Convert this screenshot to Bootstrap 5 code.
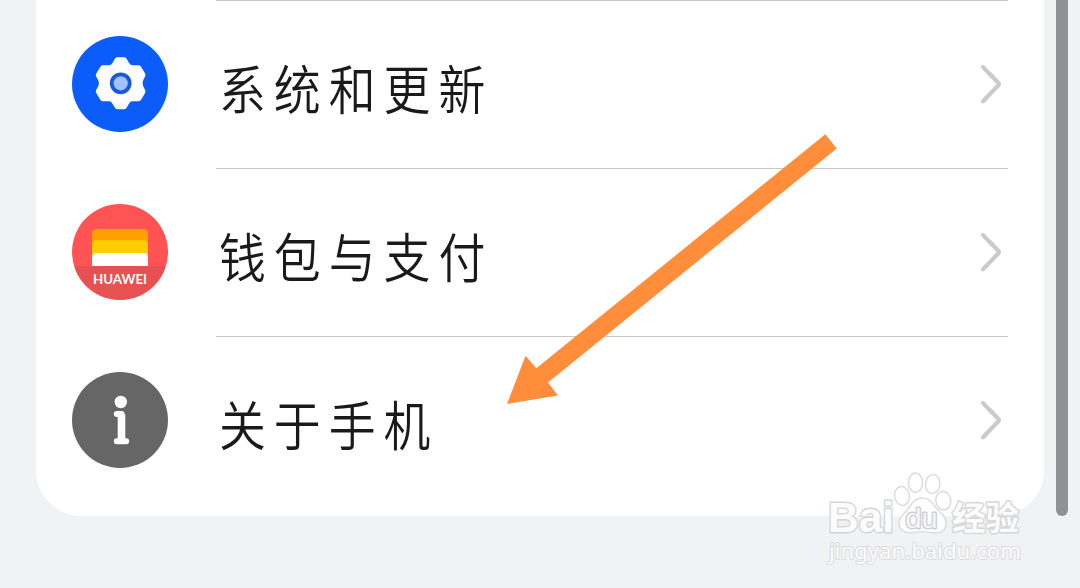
<!DOCTYPE html>
<html lang="zh-CN">
<head>
  <meta charset="UTF-8">
  <title>设置</title>
  <meta name="viewport" content="width=device-width, initial-scale=1">
  <link href="https://cdn.jsdelivr.net/npm/bootstrap@5.3.3/dist/css/bootstrap.min.css" rel="stylesheet">
  <style>
    body {
      background: #f1f2f4;
      font-family: "Liberation Sans", "Noto Sans CJK SC", sans-serif;
    }
    .screen {
      height: 588px;
      padding-left: 36px;
    }
    .settings {
      width: 1008px;
      height: 516px;
      padding: 0 36px;
      border-radius: 0 0 46px 46px;
    }
    .entry {
      height: 168px;
      gap: 48px;
    }
    .entry-icon {
      width: 96px;
      height: 96px;
    }
    .entry-body {
      border-top: 1px solid #c9c9c9;
      padding-right: 6px;
    }
    .entry-title {
      font-family: "Noto Sans CJK SC", sans-serif;
      font-size: 53px;
      font-weight: 350;
      line-height: 1;
      letter-spacing: 9px;
      color: #1a1a1a;
      transform: translateY(3px) scaleX(.885);
      transform-origin: left;
      margin-left: 3px;
    }
    .scroll-thumb {
      width: 12px;
      height: 516px;
      margin-left: 12px;
      border-radius: 0 0 6px 6px;
      background: #909193;
    }
    .pointer {
      left: 500px;
      top: 125px;
    }
    .watermark {
      left: 816px;
      top: 460px;
    }
  </style>
</head>
<body class="overflow-hidden">
  <main class="screen d-flex align-items-start position-relative">
    <div class="settings bg-white">
      <a class="entry d-flex align-items-center text-decoration-none" href="#">
        <svg class="entry-icon flex-shrink-0" viewBox="0 0 96 96">
          <circle cx="48" cy="48" r="48" fill="#0b5cf8"/>
          <path d="M45.5 24.3H52L54.5 28.5Q56.5 32.3 60.5 32.3H66.5L70.5 39L68.5 43Q66.5 47.3 68.5 51.3L70.5 55.5L66.5 62.3H60.5Q56.5 62.3 54.5 66L52 70.3H45.5L43 66Q41 62.3 37 62.3H31L26.8 55.5L29 51.3Q31 47.3 29 43L26.8 39L31 32.3H37Q41 32.3 43 28.5Z" fill="#fff" stroke="#fff" stroke-width="6" stroke-linejoin="round"/>
          <circle cx="48.7" cy="47.3" r="9" fill="#a1c1ff" stroke="#175bd8" stroke-width="3.8"/>
        </svg>
        <div class="entry-body flex-grow-1 align-self-stretch d-flex align-items-center justify-content-between">
          <span class="entry-title">系统和更新</span>
          <svg width="24" height="46" viewBox="0 0 24 46" fill="none" stroke="#cbcbcb" stroke-width="4.2" stroke-linecap="round" stroke-linejoin="round"><path d="M5 5L20 20.5Q21.6 22.2 20 23.8L5 39.3"/></svg>
        </div>
      </a>
      <a class="entry d-flex align-items-center text-decoration-none" href="#">
        <svg class="entry-icon flex-shrink-0" viewBox="0 0 96 96">
          <circle cx="48" cy="48" r="48" fill="#ff5354"/>
          <path d="M2.1 62H93.9A48 48 0 0 1 2.1 62Z" fill="#e75151"/>
          <path d="M20 62V30Q20 25 25 25H71Q76 25 76 30V62Z" fill="#ff9f00"/>
          <path d="M20 62V41Q20 36.3 25 36.3H71Q76 36.3 76 41V62Z" fill="#fc0"/>
          <path d="M20 62V54Q20 49 25 49H71Q76 49 76 54V62Z" fill="#fff"/>
          <text x="21" y="79.6" textLength="54" lengthAdjust="spacingAndGlyphs" font-family="Lato, sans-serif" font-weight="700" font-size="12.4" fill="#fff">HUAWEI</text>
        </svg>
        <div class="entry-body flex-grow-1 align-self-stretch d-flex align-items-center justify-content-between">
          <span class="entry-title">钱包与支付</span>
          <svg width="24" height="46" viewBox="0 0 24 46" fill="none" stroke="#cbcbcb" stroke-width="4.2" stroke-linecap="round" stroke-linejoin="round"><path d="M5 5L20 20.5Q21.6 22.2 20 23.8L5 39.3"/></svg>
        </div>
      </a>
      <a class="entry d-flex align-items-center text-decoration-none" href="#">
        <svg class="entry-icon flex-shrink-0" viewBox="0 0 96 96">
          <circle cx="48" cy="48" r="48" fill="#666"/>
          <circle cx="48.8" cy="30" r="6.2" fill="#fff"/>
          <path d="M44.8 42H49.5V69.2M44.8 69.2H54.2" fill="none" stroke="#fff" stroke-width="6" stroke-linecap="round" stroke-linejoin="round"/>
          <path d="M45.7 42H53.3V69H45.7Z" fill="#fff"/>
        </svg>
        <div class="entry-body flex-grow-1 align-self-stretch d-flex align-items-center justify-content-between">
          <span class="entry-title">关于手机</span>
          <svg width="24" height="46" viewBox="0 0 24 46" fill="none" stroke="#cbcbcb" stroke-width="4.2" stroke-linecap="round" stroke-linejoin="round"><path d="M5 5L20 20.5Q21.6 22.2 20 23.8L5 39.3"/></svg>
        </div>
      </a>
    </div>
    <div class="scroll-thumb"></div>

    <!-- arrow over the list, aimed at the last entry -->
    <svg class="pointer position-absolute" width="345" height="290" viewBox="500 125 345 290">
      <path d="M825.3 134.2L836.7 148.5L548 382.5L558 395.6L507 404L525.5 355.7L536.3 368.3Z" fill="#ff8d3a"/>
    </svg>

    <svg class="watermark position-absolute" width="216" height="112" viewBox="816 460 216 112">
      <g fill="#fcfcfd" stroke="#d5d6d8" stroke-width="2.8" paint-order="stroke" stroke-linejoin="round">
        <g fill="#fff" stroke="#dcdddf" stroke-width="1.6" paint-order="normal">
          <ellipse cx="915.5" cy="482.7" rx="7" ry="9.7"/>
          <ellipse cx="932.7" cy="484" rx="7.2" ry="9.5" transform="rotate(8 932.7 484)"/>
          <ellipse cx="902" cy="496" rx="7.4" ry="9.5" transform="rotate(-10 902 496)"/>
          <ellipse cx="943.3" cy="500.7" rx="7.4" ry="9.3" transform="rotate(-8 943.3 500.7)"/>
          <path d="M922 498C930 498 933 504 938 510C944 516 947 519 946 525C945 532 938 534 931 532.5C925 531.5 919 531.5 913 532.5C905 534 899 530 899 523C899 517 904 514 908 509C912 503 915 498 922 498Z"/>
        </g>
        <text x="828" y="531.5" textLength="66" lengthAdjust="spacingAndGlyphs" font-family="Liberation Sans, sans-serif" font-weight="700" font-size="42">Bai</text>
        <text x="905.5" y="527.5" textLength="32" lengthAdjust="spacingAndGlyphs" font-family="Liberation Sans, sans-serif" font-weight="400" font-size="27" fill="#f5f5f6" stroke="#cfd0d2">du</text>
        <text x="952" y="529.5" textLength="67" lengthAdjust="spacingAndGlyphs" font-family="Noto Sans CJK SC, sans-serif" font-weight="700" font-size="33">经验</text>
        <text x="829" y="558.5" textLength="192" lengthAdjust="spacingAndGlyphs" font-family="Noto Sans, sans-serif" font-size="22" stroke="#dadbdd" stroke-width="2">jingyan.baidu.com</text>
      </g>
    </svg>
  </main>
  <script src="https://cdn.jsdelivr.net/npm/bootstrap@5.3.3/dist/js/bootstrap.bundle.min.js"></script>
</body>
</html>
